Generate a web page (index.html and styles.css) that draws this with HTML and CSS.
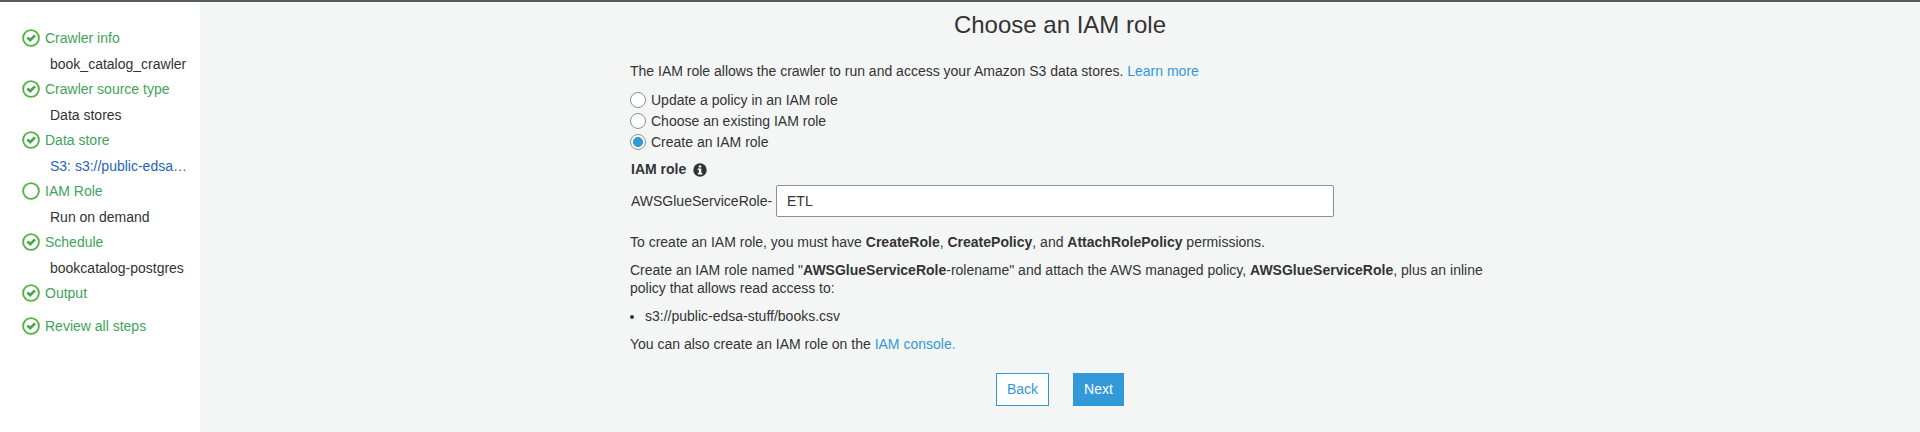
FILE: index.html
```html
<!DOCTYPE html>
<html lang="en">
<head>
<meta charset="utf-8">
<title>Choose an IAM role</title>
<link rel="stylesheet" href="styles.css">
</head>
<body>
<svg class="defs" width="0" height="0" aria-hidden="true">
  <symbol id="ring" viewBox="0 0 18 18"><circle cx="9" cy="9" r="7.9" fill="none" stroke="#57b146" stroke-width="1.9"/></symbol>
  <symbol id="done" viewBox="0 0 18 18"><circle cx="9" cy="9" r="7.9" fill="none" stroke="#57b146" stroke-width="1.9"/><path d="M5.4 8.6 L8.2 11.2 L13 6.4" fill="none" stroke="#3fa649" stroke-width="2.7"/></symbol>
</svg>
<div class="page">
  <nav class="sidebar">
    <div class="step"><svg class="mark"><use href="#done"/></svg><span>Crawler info</span></div>
    <div class="detail">book_catalog_crawler</div>
    <div class="step"><svg class="mark"><use href="#done"/></svg><span>Crawler source type</span></div>
    <div class="detail">Data stores</div>
    <div class="step"><svg class="mark"><use href="#done"/></svg><span>Data store</span></div>
    <div class="detail detail-link">S3: s3://public-edsa…</div>
    <div class="step"><svg class="mark"><use href="#ring"/></svg><span>IAM Role</span></div>
    <div class="detail">Run on demand</div>
    <div class="step"><svg class="mark"><use href="#done"/></svg><span>Schedule</span></div>
    <div class="detail">bookcatalog-postgres</div>
    <div class="step step-last"><svg class="mark"><use href="#done"/></svg><span>Output</span></div>
    <div class="step"><svg class="mark"><use href="#done"/></svg><span>Review all steps</span></div>
  </nav>
  <main class="main">
    <h1 class="title">Choose an IAM role</h1>
    <div class="content">
      <p class="intro">The IAM role allows the crawler to run and access your Amazon S3 data stores. <a class="link">Learn more</a></p>
      <div class="options">
        <label class="option"><input class="radio" type="radio" name="role">Update a policy in an IAM role</label>
        <label class="option"><input class="radio" type="radio" name="role">Choose an existing IAM role</label>
        <label class="option"><input class="radio" type="radio" name="role" checked>Create an IAM role</label>
      </div>
      <div class="field-label">IAM role
        <svg class="info" viewBox="0 0 14 14"><circle cx="7" cy="7" r="6.7" fill="#333"/><path d="M5.8 2.5h2.5v2H5.8zM4.8 5.6h3.5v4.3h1v1.5H4.8V9.9h1V7.1h-1z" fill="#fff"/></svg>
      </div>
      <div class="field"><span class="prefix">AWSGlueServiceRole-</span><input class="input" type="text" value="ETL"></div>
      <p class="text">To create an IAM role, you must have <b>CreateRole</b>, <b>CreatePolicy</b>, and <b>AttachRolePolicy</b> permissions.</p>
      <p class="text">Create an IAM role named "<b>AWSGlueServiceRole</b>-rolename" and attach the AWS managed policy, <b>AWSGlueServiceRole</b>, plus an inline<br>policy that allows read access to:</p>
      <ul class="list"><li>s3://public-edsa-stuff/books.csv</li></ul>
      <p class="text">You can also create an IAM role on the <a class="link">IAM console.</a></p>
    </div>
    <div class="actions"><button class="button">Back</button><button class="button button-primary">Next</button></div>
  </main>
</div>
</body>
</html>
```
FILE: styles.css
```css
* { box-sizing: border-box; }
body { margin: 0; font: 14px/18px "Liberation Sans", Arial, sans-serif; color: #333; }
.defs { display: block; }
.page { display: flex; height: 432px; border-top: 2px solid #545b5e; overflow: hidden; }
.sidebar { width: 200px; flex: none; padding: 27px 0 0 22px; background: #fff; white-space: nowrap; }
.step { display: flex; gap: 5px; height: 26px; color: #3fa35a; }
.step-last { height: 33px; }
.mark { width: 18px; height: 18px; flex: none; }
.detail { height: 25px; padding-left: 28px; }
.detail-link { color: #1f63b8; }
.main { flex: 1; background: #f4f6f6; }
.title { margin: 0; padding-top: 9px; font-size: 24px; line-height: 28px; font-weight: 400; text-align: center; }
.content { margin-left: 430px; white-space: nowrap; }
.intro { margin: 23px 0 0; }
.link { color: #3299d9; }
.options { margin-top: 9px; }
.option { display: flex; align-items: center; gap: 5px; height: 21px; }
.radio { appearance: none; width: 16px; height: 16px; margin: 0; border: 1px solid #8b9292; border-radius: 50%; background: #fff; }
.radio:checked { background: radial-gradient(circle, #3299d9 4.7px, #fff 5.3px); }
.field-label { display: flex; align-items: center; gap: 7px; margin: 8px 0 0 1px; font-weight: 700; }
.info { width: 14px; height: 14px; margin-top: 1px; }
.field { display: flex; align-items: center; margin-top: 7px; padding-left: 1px; }
.prefix { width: 145px; }
.input { width: 558px; height: 32px; padding: 0 10px; border: 1px solid #879191; border-radius: 2px; font: inherit; color: #333; background: #fff; }
.text { margin: 10px 0 0; }
.field + .text { margin-top: 16px; }
.list { margin: 10px 0 0; padding-left: 15px; }
.actions { display: flex; gap: 24px; margin: 20px 0 0 796px; }
.button { width: 53px; height: 33px; padding: 0 0 1px; border: 1px solid #3299d9; background: #fff; color: #3299d9; font: inherit; }
.button-primary { width: 51px; background: #3299d9; color: #fff; }
```
